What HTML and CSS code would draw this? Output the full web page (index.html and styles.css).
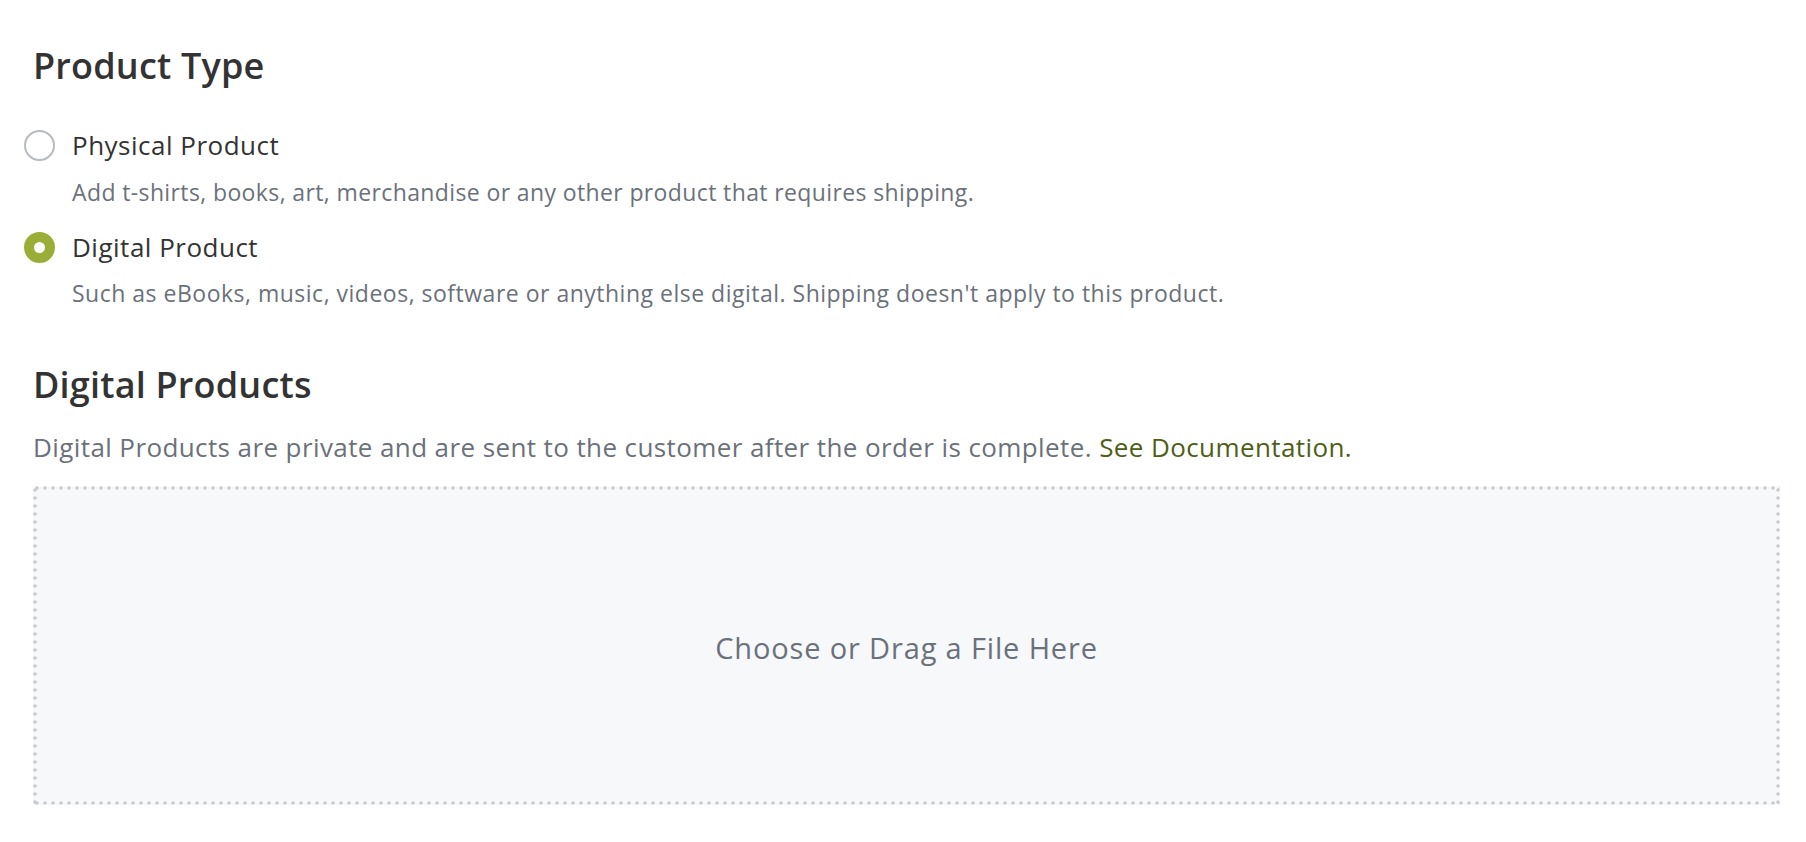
FILE: index.html
```html
<!DOCTYPE html>
<html lang="en">
<head>
<meta charset="utf-8">
<title>Product Type</title>
<link rel="stylesheet" href="styles.css">
</head>
<body>
<main class="page">
  <section class="section">
    <h2 class="heading">Product Type</h2>
    <div class="options">
      <label class="option">
        <span class="radio"></span>
        <span class="option-title">Physical Product</span>
        <span class="option-desc">Add t-shirts, books, art, merchandise or any other product that requires shipping.</span>
      </label>
      <label class="option option-second">
        <span class="radio radio-checked"></span>
        <span class="option-title">Digital Product</span>
        <span class="option-desc option-desc-wide">Such as eBooks, music, videos, software or anything else digital. Shipping doesn't apply to this product.</span>
      </label>
    </div>
  </section>
  <section class="section section-digital">
    <h2 class="heading">Digital Products</h2>
    <p class="intro">Digital Products are private and are sent to the customer after the order is complete. <a class="link" href="#">See Documentation.</a></p>
    <div class="dropzone">
      <span class="dropzone-text">Choose or Drag a File Here</span>
    </div>
  </section>
</main>
</body>
</html>
```

FILE: styles.css
```css
html, body {
  margin: 0;
  padding: 0;
  background: #ffffff;
}

body {
  font-family: "Open Sans", "Liberation Sans", sans-serif;
  color: #333333;
}

.page {
  padding: 45px 26px 0 33px;
}

.heading {
  margin: 0;
  font-size: 36px;
  line-height: 42px;
  font-weight: 600;
  letter-spacing: 0.2px;
  color: #333333;
}

.options {
  margin-top: 43.4px;
  margin-left: -9px;
}

.option {
  display: grid;
  grid-template-columns: 31px 1fr;
  column-gap: 17px;
  align-items: center;
}

.option-second {
  margin-top: 27px;
}

.radio {
  width: 31px;
  height: 31px;
  box-sizing: border-box;
  border-radius: 50%;
  border: 2px solid #b6bac1;
  background: #ffffff;
}

.radio-checked {
  border: 10px solid #9aad36;
  background: #ffffff;
}

.option-title {
  font-size: 26px;
  line-height: 31px;
  letter-spacing: 0.5px;
  color: #333333;
}

.option-desc {
  grid-column: 2;
  margin-top: 17.2px;
  font-size: 23px;
  line-height: 26px;
  letter-spacing: 0.38px;
  color: #6b717a;
}

.option-desc-wide {
  letter-spacing: 0.5px;
}

.section-digital {
  margin-top: 58.5px;
}

.intro {
  margin: 25.4px 0 0 0;
  font-size: 26px;
  line-height: 31px;
  letter-spacing: 0.4px;
  color: #6b717a;
}

.link {
  color: #4f5e16;
  text-decoration: none;
}

.dropzone {
  margin-top: 23.6px;
  height: 319px;
  display: flex;
  align-items: center;
  justify-content: center;
  background-color: #f7f8fa;
  background-image:
    radial-gradient(circle, #c9cbce 1.4px, transparent 1.9px),
    radial-gradient(circle, #c9cbce 1.4px, transparent 1.9px),
    radial-gradient(circle, #c9cbce 1.4px, transparent 1.9px),
    radial-gradient(circle, #c9cbce 1.4px, transparent 1.9px);
  background-size: 8px 4px, 8px 4px, 4px 8px, 4px 8px;
  background-position: 0 0, 0 100%, 0 0, 100% 0;
  background-repeat: repeat-x, repeat-x, repeat-y, repeat-y;
}

.dropzone-text {
  font-size: 29px;
  line-height: 34px;
  letter-spacing: 0.85px;
  color: #6b717a;
  padding-top: 4.5px;
}
```
